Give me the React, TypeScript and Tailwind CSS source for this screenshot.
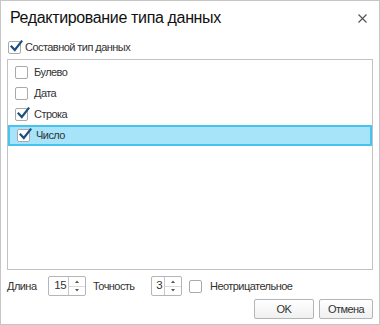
import React from "react";

function Check({ checked }: { checked?: boolean }) {
  return (
    <div className="relative w-[13px] h-[13px] shrink-0 rounded-[2px] border border-[#a9a9a9] bg-white">
      {checked && (
        <svg className="absolute left-[1px] top-[-2px]" width="13" height="13" viewBox="0 0 13 13">
          <path d="M1.5 6.5 L4.8 10 L11.5 1.5" fill="none" stroke="#1d4f7f" strokeWidth="2.2" strokeLinecap="square" strokeLinejoin="miter" />
        </svg>
      )}
    </div>
  );
}

function Spin({ value, w }: { value: string; w: string }) {
  return (
    <div className={`flex h-[20px] rounded-[2px] border border-[#b5b5b5] bg-white ${w}`}>
      <div className="flex-1 flex items-center justify-end pr-[2px] text-[11.5px] text-[#333]">{value}</div>
      <div className="w-[17px] border-l border-[#c8c8c8] flex flex-col">
        <div className="flex-1 flex items-center justify-center border-b border-[#dadada]">
          <svg width="4" height="3" viewBox="0 0 4 3"><path d="M0 3 L2 0.5 L4 3Z" fill="#555" /></svg>
        </div>
        <div className="flex-1 flex items-center justify-center">
          <svg width="4" height="3" viewBox="0 0 4 3"><path d="M0 0 L2 2.5 L4 0Z" fill="#555" /></svg>
        </div>
      </div>
    </div>
  );
}

const T = "text-[11px] tracking-[-0.55px]";

export default function App() {
  const items = [
    { t: "Булево", c: false },
    { t: "Дата", c: false },
    { t: "Строка", c: true },
    { t: "Число", c: true, sel: true },
  ];
  return (
    <div
      className="w-[380px] h-[325px] border border-[#c6c6c6] bg-white flex flex-col text-[#333]"
      style={{ fontFamily: '"Liberation Sans", Arial, sans-serif' }}
    >
      <div className="h-[32px] flex items-center pl-[9px] pr-[12px] pt-[1px]">
        <div className="flex-1 text-[16px] tracking-[-0.35px] text-[#111]">Редактирование типа данных</div>
        <svg width="9" height="9" viewBox="0 0 9 9" className="mt-[1px]">
          <path d="M0.5 0.5 L8.5 8.5 M8.5 0.5 L0.5 8.5" stroke="#555" strokeWidth="1.2" />
        </svg>
      </div>
      <div className="h-[26px] flex items-center pl-[7px] pt-[3px] gap-[4px]">
        <Check checked />
        <span className={T}>Составной тип данных</span>
      </div>
      <div className="ml-[6px] w-[366px] h-[211px] border border-[#c3c3c3] pt-[2px] flex flex-col">
        {items.map((it) => (
          <div
            key={it.t}
            className={`h-[21px] flex items-center gap-[6px] pl-[7px] ${
              it.sel ? "bg-[#a7e4fa] border-2 border-[#46c4ee] pl-[5px]" : ""
            }`}
          >
            <Check checked={it.c} />
            <span className={T}>{it.t}</span>
          </div>
        ))}
      </div>
      <div className={`mt-[6px] h-[20px] flex items-center pl-[6px] ${T}`}>
        <span className="w-[41px]">Длина</span>
        <Spin value="15" w="w-[38px]" />
        <span className="ml-[7px] w-[58px]">Точность</span>
        <Spin value="3" w="w-[31px]" />
        <div className="ml-[7px] flex items-center gap-[8px]">
          <Check />
          <span>Неотрицательное</span>
        </div>
      </div>
      <div className={`mt-[3px] flex justify-end gap-[5px] pr-[6px] ${T}`}>
        <div className="w-[60px] h-[20px] rounded-[2px] border border-[#b5b5b5] bg-gradient-to-b from-white to-[#f0f0f0] flex items-center justify-center">
          OK
        </div>
        <div className="w-[54px] h-[20px] rounded-[2px] border border-[#b5b5b5] bg-gradient-to-b from-white to-[#f0f0f0] flex items-center justify-center">
          Отмена
        </div>
      </div>
    </div>
  );
}
